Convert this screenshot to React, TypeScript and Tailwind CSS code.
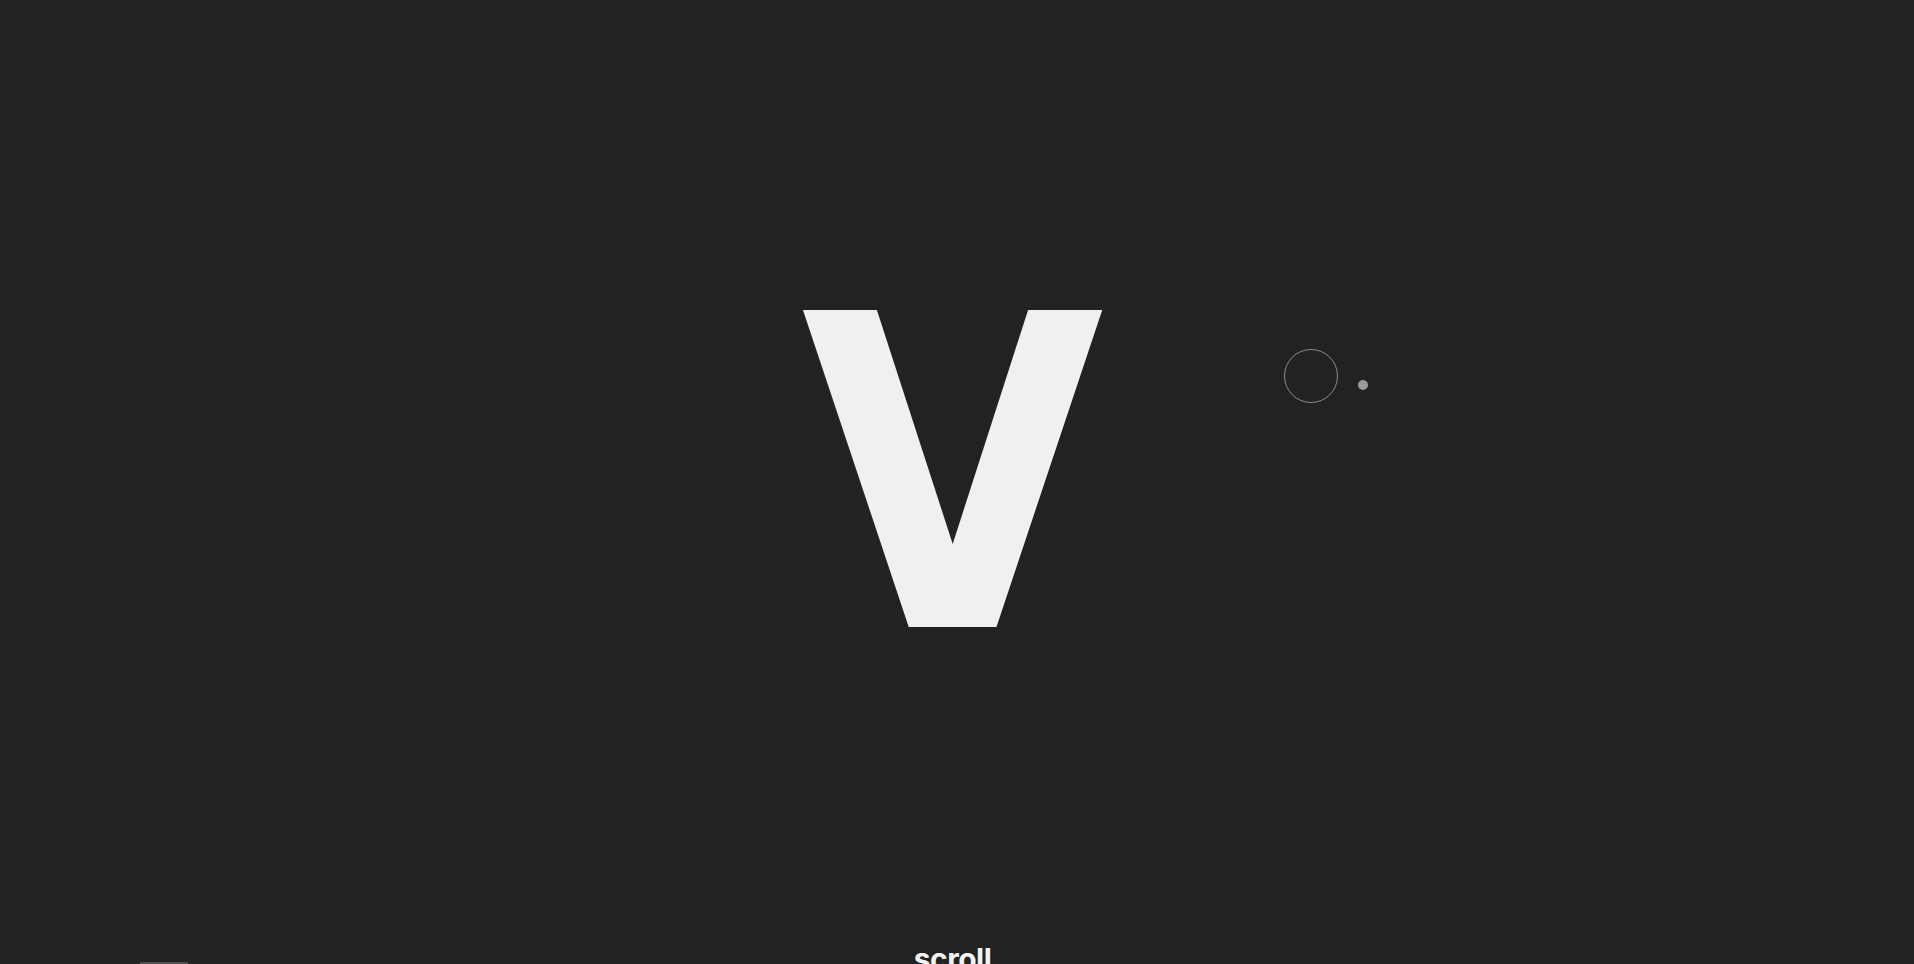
import React from "react";

export default function App() {
  return (
    <div className="relative w-full h-[964px] overflow-hidden bg-[#222222]">
      <div className="flex flex-col items-center pr-[9px]">
        <div
          className="pt-[259px] text-[435px] leading-none font-bold text-[#f0f0f0] select-none"
          style={{ fontFamily: "'DejaVu Sans Condensed', 'DejaVu Sans', sans-serif" }}
        >
          V
        </div>
        <div
          className="mt-[250px] text-[30px] leading-none font-bold text-[#f3f3f3] tracking-[-0.5px]"
          style={{ fontFamily: "Inter, 'Noto Sans', sans-serif" }}
        >
          scroll
        </div>
      </div>

      {/* custom cursor */}
      <div className="absolute left-[1284px] top-[349px] w-[54px] h-[54px] rounded-full border-[1.5px] border-[#8c8c8c]" />
      <div className="absolute left-[1358px] top-[380px] w-[10px] h-[10px] rounded-full bg-[#9a9a9a]" />

      {/* small bottom indicator */}
      <div className="absolute bottom-0 left-[140px] w-[48px] h-[2px] bg-[#4f4f4f]" />
    </div>
  );
}
